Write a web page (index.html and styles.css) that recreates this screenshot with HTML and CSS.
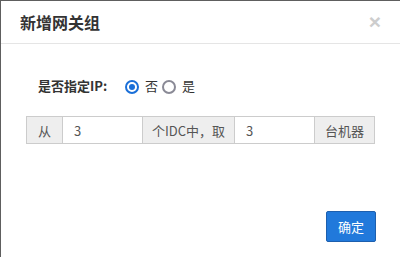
FILE: index.html
```html
<!DOCTYPE html>
<html lang="zh-CN">
<head>
    <meta charset="UTF-8">
    <title>新增网关组</title>
    <link rel="stylesheet" href="styles.css">
</head>
<body>
    <div class="modal">
        <div class="modal-header">
            <h4 class="modal-title">新增网关组</h4>
            <span class="close">&times;</span>
        </div>
        <div class="modal-body">
            <div class="form-row">
                <label class="form-label">是否指定IP:</label>
                <label class="radio"><span class="radio-dot checked"></span>否</label>
                <label class="radio"><span class="radio-dot"></span>是</label>
            </div>
            <div class="input-group">
                <span class="addon addon-from">从</span>
                <input type="text" class="field field-idc" value="3">
                <span class="addon addon-mid">个IDC中，取</span>
                <input type="text" class="field field-num" value="3">
                <span class="addon addon-end">台机器</span>
            </div>
        </div>
        <div class="modal-footer">
            <button type="button" class="btn-primary">确定</button>
        </div>
    </div>
</body>
</html>
```

FILE: styles.css
```css
body {
    margin: 0;
    background: #5e5e5e;
    font-family: "Noto Sans CJK SC", "Liberation Sans", sans-serif;
    color: #333;
}
.modal {
    margin: 1px 0 0 1px;
    width: 399px;
    height: 256px;
    background: #fff;
    display: flex;
    flex-direction: column;
}
.modal-header {
    height: 42px;
    padding: 0 19px 0 19px;
    border-bottom: 1px solid #e5e5e5;
    display: flex;
    align-items: center;
    justify-content: space-between;
}
.modal-title {
    margin: 0;
    font-size: 16px;
    font-weight: bold;
    line-height: 20px;
}
.close {
    font-size: 21px;
    line-height: 20px;
    color: #cdcdcd;
    font-family: "Liberation Sans", sans-serif;
    font-weight: bold;
}
.modal-body {
    padding: 31px 24px 0 25px;
}
.form-row {
    display: flex;
    align-items: center;
    height: 20px;
    font-size: 13px;
}
.form-label {
    font-weight: bold;
    margin-left: 12px;
    width: 87px;
}
.radio {
    display: flex;
    align-items: center;
    margin-right: 4px;
}
.radio-dot {
    width: 10px;
    height: 10px;
    border: 2px solid #8a8a96;
    border-radius: 50%;
    margin-right: 6px;
    margin-top: 3px;
    position: relative;
}
.radio-dot.checked {
    border-color: #1a6fd8;
}
.radio-dot.checked::after {
    content: "";
    position: absolute;
    left: 2px;
    top: 2px;
    width: 6px;
    height: 6px;
    border-radius: 50%;
    background: #1a6fd8;
}
.input-group {
    display: flex;
    margin-top: 21px;
    height: 28px;
    font-size: 13px;
}
.addon {
    background: #eee;
    border: 1px solid #ccc;
    color: #555;
    display: flex;
    align-items: center;
    justify-content: center;
    box-sizing: border-box;
}
.addon-from { width: 37px; }
.addon-mid { width: 93px; }
.addon-end { width: 61px; }
.field {
    box-sizing: border-box;
    height: 28px;
    margin: 0;
    border: 1px solid #ccc;
    border-left: 0;
    border-right: 0;
    padding: 0 11px;
    font-size: 13px;
    color: #555;
    font-family: "Noto Sans CJK SC", "Liberation Sans", sans-serif;
    outline: none;
}
.field-idc { width: 79px; }
.field-num { width: 79px; }
.modal-footer {
    display: flex;
    justify-content: flex-end;
    padding: 67px 24px 0 0;
}
.btn-primary {
    width: 50px;
    height: 31px;
    background: #2179db;
    border: 1px solid #1d5fae;
    border-radius: 2px;
    color: #fff;
    font-size: 13px;
    font-family: "Noto Sans CJK SC", "Liberation Sans", sans-serif;
    padding: 0;
}
```
